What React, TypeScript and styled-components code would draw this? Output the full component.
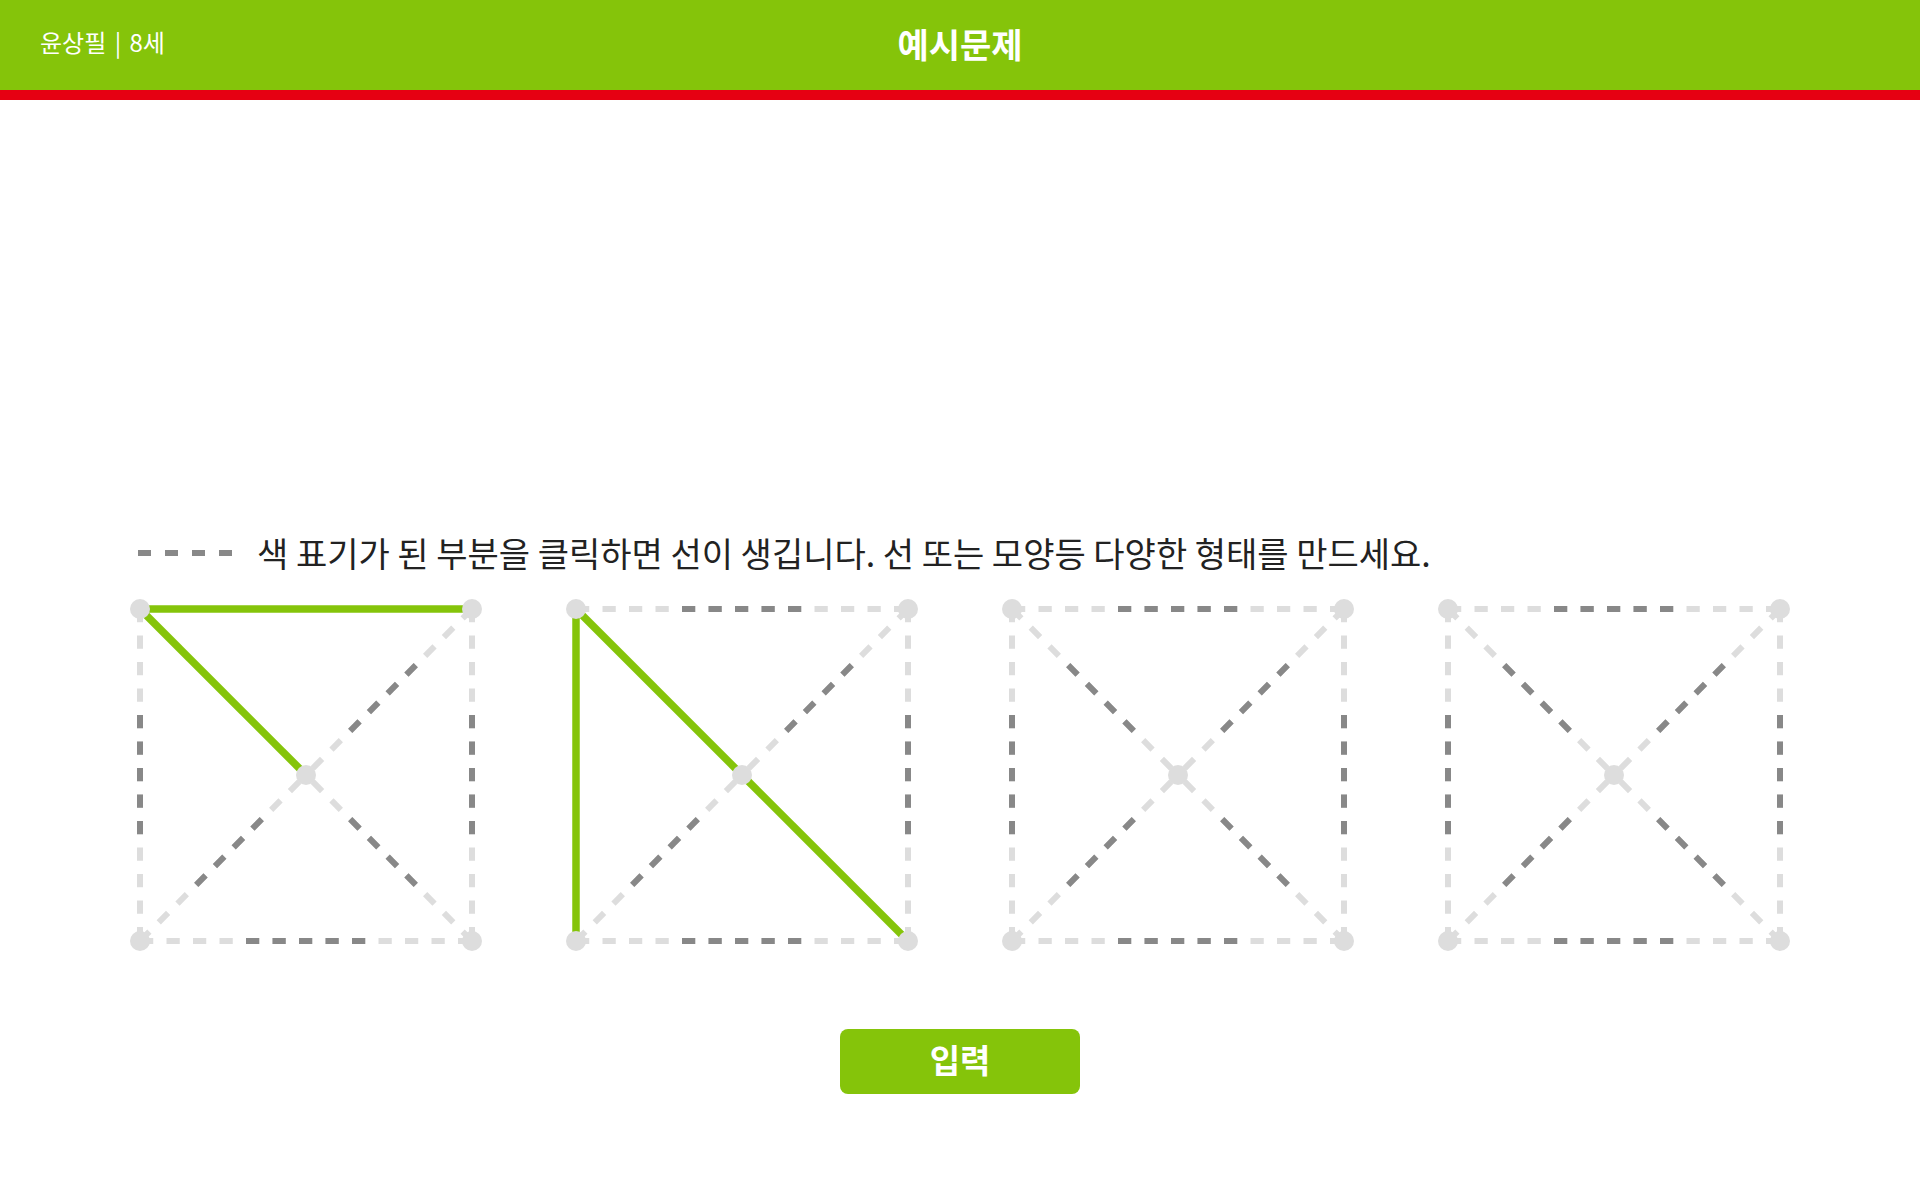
import React from "react";
import styled, { createGlobalStyle } from "styled-components";

const GREEN = "#85c40a";
const RED = "#e60012";
const LIGHT = "#dddddd";
const DARK = "#888888";
const DOT = "#dddddd";

const GlobalStyle = createGlobalStyle`
  html, body {
    margin: 0;
    padding: 0;
    background: #ffffff;
    font-family: "Noto Sans CJK KR", "Noto Sans", sans-serif;
  }
`;

const Page = styled.div`
  width: 1920px;
  min-height: 1200px;
  display: flex;
  flex-direction: column;
`;

const Header = styled.header`
  height: 90px;
  background: ${GREEN};
  border-bottom: 10px solid ${RED};
  display: grid;
  grid-template-columns: 1fr auto 1fr;
  align-items: center;
  color: #ffffff;
`;

const UserInfo = styled.div`
  padding-left: 40px;
  padding-bottom: 6px;
  font-size: 24px;
  line-height: 1;
  font-weight: 400;
  white-space: pre;
`;

const Separator = styled.span`
  margin: 0 3px;
`;

const Title = styled.h1`
  margin: 0;
  padding-bottom: 3px;
  font-size: 34px;
  line-height: 1;
  font-weight: 700;
`;

const Main = styled.main`
  display: flex;
  flex-direction: column;
  align-items: center;
  padding-top: 433px;
`;

const Instruction = styled.div`
  width: 1660px;
  box-sizing: border-box;
  padding-left: 8px;
  display: flex;
  align-items: center;
  gap: 25px;
  height: 40px;
  color: #222222;
  font-size: 34px;
  line-height: 1;
  white-space: nowrap;
`;

const BoxRow = styled.div`
  margin-top: 26px;
  display: flex;
  gap: 84px;
`;

const SubmitButton = styled.button`
  margin-top: 78px;
  width: 240px;
  height: 65px;
  padding: 0 0 4px;
  border: none;
  border-radius: 8px;
  background: ${GREEN};
  color: #ffffff;
  font-family: "Noto Sans CJK KR", sans-serif;
  font-size: 33px;
  line-height: 1;
  font-weight: 700;
  cursor: pointer;
`;

const P = 26.5;
const D = 13.25;

type Pt = [number, number];

const S = 332;
const O = 10;
const pts: Record<string, Pt> = {
  TL: [O, O],
  TR: [O + S, O],
  BL: [O, O + S],
  BR: [O + S, O + S],
  C: [O + S / 2, O + S / 2],
};

type EdgeDef = { id: string; a: string; b: string; dark: [number, number] };

const edges: EdgeDef[] = [
  { id: "top", a: "TL", b: "TR", dark: [4, 8] },
  { id: "right", a: "TR", b: "BR", dark: [4, 8] },
  { id: "bottom", a: "BL", b: "BR", dark: [4, 8] },
  { id: "left", a: "TL", b: "BL", dark: [4, 8] },
  { id: "tlc", a: "TL", b: "C", dark: [3, 6] },
  { id: "trc", a: "TR", b: "C", dark: [3, 6] },
  { id: "blc", a: "BL", b: "C", dark: [3, 6] },
  { id: "brc", a: "BR", b: "C", dark: [3, 6] },
];

const DashedEdge: React.FC<{ e: EdgeDef }> = ({ e }) => {
  const [ax, ay] = pts[e.a];
  const [bx, by] = pts[e.b];
  const L = Math.hypot(bx - ax, by - ay);
  const ux = (bx - ax) / L;
  const uy = (by - ay) / L;
  const s = e.dark[0] * P;
  const t = e.dark[1] * P + D;
  return (
    <g>
      <line
        x1={ax}
        y1={ay}
        x2={bx}
        y2={by}
        stroke={LIGHT}
        strokeWidth={6}
        strokeDasharray={`${D} ${P - D}`}
      />
      <line
        x1={ax + ux * s}
        y1={ay + uy * s}
        x2={ax + ux * t}
        y2={ay + uy * t}
        stroke={DARK}
        strokeWidth={6}
        strokeDasharray={`${D} ${P - D}`}
      />
    </g>
  );
};

const GreenEdge: React.FC<{ e: EdgeDef }> = ({ e }) => {
  const [ax, ay] = pts[e.a];
  const [bx, by] = pts[e.b];
  return <line x1={ax} y1={ay} x2={bx} y2={by} stroke={GREEN} strokeWidth={7.5} />;
};

const PuzzleSvg = styled.svg`
  display: block;
  width: 352px;
  height: 352px;
`;

const Puzzle: React.FC<{ selected: string[] }> = ({ selected }) => (
  <PuzzleSvg viewBox="0 0 352 352">
    {edges
      .filter((e) => !selected.includes(e.id))
      .map((e) => (
        <DashedEdge key={e.id} e={e} />
      ))}
    {edges
      .filter((e) => selected.includes(e.id))
      .map((e) => (
        <GreenEdge key={e.id} e={e} />
      ))}
    {Object.entries(pts).map(([k, [x, y]]) => (
      <circle key={k} cx={x} cy={y} r={10} fill={DOT} />
    ))}
  </PuzzleSvg>
);

const LegendSvg = styled.svg`
  display: block;
  width: 94px;
  height: 6px;
  flex: none;
`;

const puzzles: string[][] = [
  ["top", "tlc"],
  ["left", "tlc", "brc"],
  [],
  [],
];

export default function App() {
  return (
    <Page>
      <GlobalStyle />
      <Header>
        <UserInfo>
          윤상필 <Separator>|</Separator> 8세
        </UserInfo>
        <Title>예시문제</Title>
        <div />
      </Header>
      <Main>
        <Instruction>
          <LegendSvg viewBox="0 0 94 6">
            <line x1={0} y1={3} x2={94} y2={3} stroke={DARK} strokeWidth={6} strokeDasharray="13 14" />
          </LegendSvg>
          <span>색 표기가 된 부분을 클릭하면 선이 생깁니다. 선 또는 모양등 다양한 형태를 만드세요.</span>
        </Instruction>
        <BoxRow>
          {puzzles.map((sel, i) => (
            <Puzzle key={i} selected={sel} />
          ))}
        </BoxRow>
        <SubmitButton>입력</SubmitButton>
      </Main>
    </Page>
  );
}
